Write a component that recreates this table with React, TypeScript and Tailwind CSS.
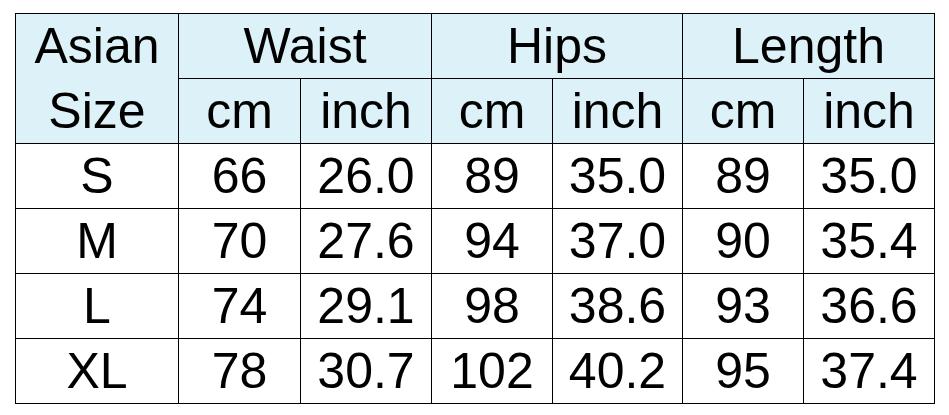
import React from "react";

const rows = [
  ["S", "66", "26.0", "89", "35.0", "89", "35.0"],
  ["M", "70", "27.6", "94", "37.0", "90", "35.4"],
  ["L", "74", "29.1", "98", "38.6", "93", "36.6"],
  ["XL", "78", "30.7", "102", "40.2", "95", "37.4"],
];

const head = "bg-[#dcf2f8] flex items-center justify-center";
const cell = "bg-white flex items-center justify-center";

export default function App() {
  return (
    <div
      className="w-[949px] h-[415px] bg-white pt-[13px] pl-[15px]"
      style={{ fontFamily: '"Liberation Sans", Arial, sans-serif' }}
    >
      <div className="inline-block bg-black p-px">
        <div className="grid grid-cols-[162px_121px_130px_120px_129px_120px_130px] grid-rows-[64px_64px_64px_64px_64px_64px] gap-px text-[50px] text-black leading-none">
          <div className={`${head} row-span-2 flex-col leading-[65px]`}>
            <span>Asian</span>
            <span>Size</span>
          </div>
          <div className={`${head} col-span-2`}>Waist</div>
          <div className={`${head} col-span-2`}>Hips</div>
          <div className={`${head} col-span-2`}>Length</div>
          <div className={head}>cm</div>
          <div className={head}>inch</div>
          <div className={head}>cm</div>
          <div className={head}>inch</div>
          <div className={head}>cm</div>
          <div className={head}>inch</div>
          {rows.map((r) =>
            r.map((v, i) => (
              <div key={r[0] + i} className={cell}>
                {v}
              </div>
            ))
          )}
        </div>
      </div>
    </div>
  );
}
